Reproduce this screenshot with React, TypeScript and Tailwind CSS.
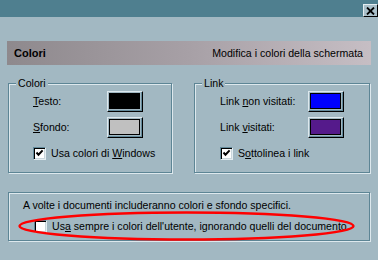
const BG = "#a2b8c2";

function Swatch({ color }: { color: string }) {
  return (
    <div className="w-[36px] h-[21px] border-t border-l border-t-[#dde8ed] border-l-[#dde8ed] border-r border-b border-r-black border-b-black shadow-[inset_-1px_-1px_0_#62899a] pt-[1px] pl-[1px] pr-[2px] pb-[2px] flex">
      <div className="flex-1 border border-black" style={{ background: color }} />
    </div>
  );
}

function CheckBox({ checked }: { checked?: boolean }) {
  return (
    <div className="w-[13px] h-[13px] shrink-0 border border-t-[#62899a] border-l-[#62899a] border-r-[#e4edf1] border-b-[#e4edf1] bg-white shadow-[inset_1px_1px_0_#000,inset_-1px_-1px_0_#c9d6dc] flex items-center justify-center">
      {checked && (
        <svg width="9" height="9" viewBox="0 0 9 9">
          <path d="M1.5 3.5 L3.5 5.8 L7.6 1.4" fill="none" stroke="#000" strokeWidth="2" />
        </svg>
      )}
    </div>
  );
}

function GroupBox({ title, className, children }: { title?: string; className: string; children: React.ReactNode }) {
  return (
    <div className={`relative border border-[#5d8595] shadow-[1px_1px_0_#dde8ed,inset_1px_1px_0_#dde8ed] ${className}`}>
      {title && (
        <span className="absolute -top-[8px] left-[7px] px-[2px] leading-[14px]" style={{ background: BG }}>
          {title}
        </span>
      )}
      {children}
    </div>
  );
}

function ColorRow({ label, color, labelWidth }: { label: React.ReactNode; color: string; labelWidth: string }) {
  return (
    <div className="flex items-center h-[21px]">
      <span className={labelWidth}>{label}</span>
      <Swatch color={color} />
    </div>
  );
}

export default function App() {
  return (
    <div
      className="relative w-[378px] h-[260px] overflow-hidden bg-[#a2b8c2] text-black text-[10.6px] leading-[13px] font-['Liberation_Sans',Arial,sans-serif]"
    >
      <div className="h-[17px] bg-[#4f7f8f] flex justify-end pt-[4px]">
        <div className="w-[15px] h-[13px] bg-[#a9bfc9] border-t border-l border-[#e4edf1] border-r border-b border-r-black border-b-black flex items-center justify-center">
          <svg width="9" height="8" viewBox="0 0 9 8">
            <path d="M1 0.5 L8 7.5 M8 0.5 L1 7.5" stroke="#000" strokeWidth="1.8" />
          </svg>
        </div>
      </div>

      <div className="mt-[24px] ml-[7px] w-[364px] h-[24px] flex items-center justify-between pl-[7px] pr-[8px] bg-[linear-gradient(90deg,#8e898d,#a7a0a6_50%,#c6bec4)]">
        <span className="font-bold text-[11px]">Colori</span>
        <span>Modifica i colori della schermata</span>
      </div>

      <div className="mt-[18px] ml-[8px] flex gap-[22px]">
        <GroupBox title="Colori" className="w-[164px] h-[90px] pt-[7px] pl-[24px]">
          <ColorRow label={<><u>T</u>esto:</>} color="#000000" labelWidth="w-[74px]" />
          <div className="mt-[5px]">
            <ColorRow label={<><u>S</u>fondo:</>} color="#c0c0c0" labelWidth="w-[74px]" />
          </div>
          <div className="mt-[9px] flex items-center gap-[5px]">
            <CheckBox checked />
            <span>Usa colori di <u>W</u>indows</span>
          </div>
        </GroupBox>
        <GroupBox title="Link" className="w-[176px] h-[90px] pt-[7px] pl-[25px]">
          <ColorRow label={<>Link <u>n</u>on visitati:</>} color="#0000ff" labelWidth="w-[88px]" />
          <div className="mt-[5px]">
            <ColorRow label={<>Link <u>v</u>isitati:</>} color="#551a8b" labelWidth="w-[88px]" />
          </div>
          <div className="mt-[9px] flex items-center gap-[5px]">
            <CheckBox checked />
            <span>S<u>o</u>ttolinea i link</span>
          </div>
        </GroupBox>
      </div>

      <GroupBox className="mt-[19px] ml-[8px] w-[362px] h-[49px] pt-[6px] pl-[14px]">
        <div>A volte i documenti includeranno colori e sfondo specifici.</div>
        <div className="mt-[8px] ml-[11px] flex items-center gap-[5px]">
          <CheckBox />
          <span>Us<u>a</u> sempre i colori dell'utente, ignorando quelli del documento</span>
        </div>
      </GroupBox>

      <svg className="absolute inset-0 pointer-events-none" width="378" height="260">
        <ellipse cx="186.5" cy="226" rx="167" ry="13.5" fill="none" stroke="#ff0000" strokeWidth="2.5" />
      </svg>
    </div>
  );
}
